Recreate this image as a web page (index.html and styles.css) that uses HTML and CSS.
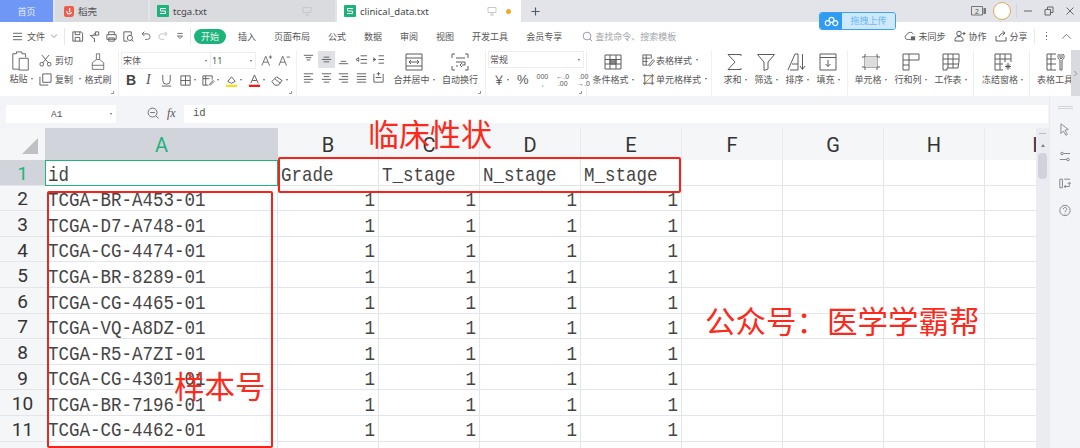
FILE: index.html
```html
<!DOCTYPE html>
<html lang="zh-CN">
<head>
<meta charset="utf-8">
<title>clinical_data.txt</title>
<link rel="stylesheet" href="styles.css">
</head>
<body>
<div class="app">
  <header class="tabbar">
    <div class="tab tab-home">首页</div>
    <div class="tab tab-doc tab-daoke">
      <svg class="logo" viewBox="0 0 10 11"><path d="M2 0h6a2 2 0 0 1 2 2v6a3 3 0 0 1-3 3H2a2 2 0 0 1-2-2V2a2 2 0 0 1 2-2z" fill="#ee5d4b"/><path d="M5.600 2v4.200M2.800 5.200c.2 2 1.400 2.800 2.400 2.800 1.200 0 2-.8 2.400-2" stroke="#fff" fill="none" stroke-width="1.200"/></svg>
      <span>稻壳</span>
    </div>
    <div class="tab tab-doc tab-tcga">
      <svg class="logo logo-s" viewBox="0 0 12 12"><rect width="12" height="12" rx="1" fill="#1fb37c"/><path d="M9 3.500H3.500v2.500h5v2.500H3" stroke="#fff" fill="none"/></svg>
      <span class="tab-name">tcga.txt</span>
      <svg class="mon" viewBox="0 0 10 10"><path d="M1 1.500h8v5H1zM5 6.500V9M3 9h4" /></svg>
    </div>
    <div class="tab tab-doc tab-active">
      <svg class="logo logo-s" viewBox="0 0 12 12"><rect width="12" height="12" rx="1" fill="#1fb37c"/><path d="M9 3.500H3.500v2.500h5v2.500H3" stroke="#fff" fill="none"/></svg>
      <span class="tab-name">clinical_data.txt</span>
      <svg class="mon" viewBox="0 0 10 10"><path d="M1 1.500h8v5H1zM5 6.500V9M3 9h4" /></svg>
      <span class="dot"></span>
    </div>
    <svg class="plus" viewBox="0 0 10 10"><path d="M5 .5v9M.5 5h9"/></svg>
    <div class="tab-right">
      <svg class="win-badge" viewBox="0 0 16 10"><path d="M.5.500h11v8.500H.5z"/><path d="M12.500 2h2.500v6h-2.500" fill="#777" stroke="none"/><text x="6" y="7.500" class="badge-num">2</text></svg>
      <span class="avatar"></span>
      <span class="vsep"></span>
      <svg class="win" viewBox="0 0 10 10"><path d="M1 5h8"/></svg>
      <svg class="win" viewBox="0 0 10 10"><path d="M1 3.500h5.500V9H1zM3.500 3.500V1H9v5.500H6.500"/></svg>
      <svg class="win" viewBox="0 0 10 10"><path d="M1.500 1.500l7 7M8.500 1.500l-7 7"/></svg>
    </div>
  </header>

  <div class="upload">
    <span class="upload-icon"><svg viewBox="0 0 14 10"><circle cx="3.500" cy="6.500" r="2.300"/><circle cx="10.500" cy="6.500" r="2.300"/><circle cx="7" cy="3.500" r="2.300"/></svg></span>
    <span class="upload-text">拖拽上传</span>
  </div>

  <nav class="menubar">
    <div class="qa">
      <svg class="i burger" viewBox="0 0 12 12"><path d="M1 2.500h10M1 6h10M1 9.500h10"/></svg>
      <span class="menu-file">文件</span>
      <svg class="chev" viewBox="0 0 8 8"><path d="M1 2.500l3 3 3-3"/></svg>
      <span class="vsep-m"></span>
      <svg class="i qa-i" viewBox="0 0 14 14"><path d="M2 2h9l1.500 1.500V12H2zM4.500 2v3h5V2M4.500 12V8h5v4"/></svg>
      <svg class="i qa-i" viewBox="0 0 14 14"><path d="M8 2h3.500v3.500H8zM2 6h4M4 6c0 2 1 3 3 3V13"/><circle cx="7" cy="5" r="1"/></svg>
      <svg class="i qa-i" viewBox="0 0 14 14"><path d="M4 5V2h6v3M2 5h10v5H2zM4 8.500h6V12H4z"/></svg>
      <svg class="i qa-i" viewBox="0 0 14 14"><path d="M2 2h8v4M2 2v10h4"/><circle cx="8.500" cy="8.500" r="2.800"/><path d="M10.500 10.500l2 2"/></svg>
      <svg class="i qa-i qa-l" viewBox="0 0 14 14"><path d="M5 2L2.500 4.500 5 7M2.500 4.500h6a3.200 3.200 0 0 1 0 6.500H6"/></svg>
      <svg class="i qa-i qa-l qa-off" viewBox="0 0 14 14"><path d="M9 2l2.500 2.500L9 7M11.500 4.500h-6a3.200 3.200 0 0 0 0 6.500H8"/></svg>
      <svg class="i qa-i qa-l" viewBox="0 0 14 14"><path d="M4 4h6M4 7l3 3 3-3z"/></svg>
      <span class="vsep-m"></span>
    </div>
    <div class="menu-items">
      <span class="pill">开始</span>
      <span class="mi">插入</span>
      <span class="mi">页面布局</span>
      <span class="mi">公式</span>
      <span class="mi">数据</span>
      <span class="mi">审阅</span>
      <span class="mi">视图</span>
      <span class="mi">开发工具</span>
      <span class="mi">会员专享</span>
    </div>
    <div class="search">
      <svg class="i" viewBox="0 0 12 12"><circle cx="5.500" cy="5.500" r="4.200"/><path d="M8.500 8.500l2.500 2.500"/></svg>
      <span>查找命令、搜索模板</span>
    </div>
    <div class="menu-right">
      <span class="mr"><svg class="i" viewBox="0 0 14 12"><path d="M8 10H3.500a2.800 2.800 0 0 1 0-5.500A4 4 0 0 1 11 4"/><rect x="8.500" y="7" width="4" height="3.500" fill="#666"/></svg>未同步</span>
      <span class="mr"><svg class="i" viewBox="0 0 12 12"><circle cx="5" cy="3.500" r="2.300"/><path d="M1 11V9.500c0-2 1.500-3 4-3s4 1 4 3V11zM10 2v3M8.500 3.500h3"/></svg>协作</span>
      <span class="mr"><svg class="i" viewBox="0 0 12 12"><path d="M1 6v5h10V7M4 7c1-3 3-4 5-4M7.500 1L10 3 7.500 5.500"/></svg>分享</span>
      <span class="vsep-r"></span>
      <span class="dots"><i></i><i></i><i></i></span>
      <svg class="caret" viewBox="0 0 12 8"><path d="M1 6.500l5-5 5 5"/></svg>
    </div>
  </nav>

  <section class="ribbon">
    <div class="grp g-clip">
      <div class="big b-paste">
        <svg class="i bi" viewBox="0 0 20 22"><path d="M1 3h4V1h6v2h4v4M1 3v17h7M8 8h10v13H8z"/></svg>
        <span class="lb">粘贴<em class="dn"></em></span>
      </div>
      <div class="stack">
        <span class="sm"><svg class="i" viewBox="0 0 14 14"><circle cx="3" cy="11" r="2"/><circle cx="11" cy="11" r="2"/><path d="M4 9.500L11 1M10 9.500L3 1"/></svg>剪切</span>
        <span class="sm"><svg class="i" viewBox="0 0 14 14"><path d="M4 1h9v9H4zM1 4v9h9"/></svg>复制<em class="dn"></em></span>
      </div>
      <div class="big b-brush">
        <svg class="i bi" viewBox="0 0 18 22"><path d="M7 1h4v7H7zM7 8L2 12v8h14v-8l-5-4M2 15h14"/></svg>
        <span class="lb">格式刷</span>
      </div>
      <em class="corner"></em>
    </div>
    <div class="grp g-font">
      <div class="font-row">
        <span class="sel sel-font">宋体<em class="dn"></em></span>
        <span class="sel sel-size">11<em class="dn"></em></span>
        <svg class="i f-a" viewBox="0 0 14 14"><path d="M1 13L5.500 2 10 13M3 9h5M11 1v4M9 3h4"/></svg>
        <svg class="i f-a" viewBox="0 0 14 14"><path d="M1 13L5.500 2 10 13M3 9h5M10 3h4"/></svg>
      </div>
      <div class="fmt-row">
        <b class="bold">B</b>
        <span class="ital">I</span>
        <svg class="i fi" viewBox="0 0 14 14"><path d="M3 1v6a4 4 0 0 0 8 0V1M2 13h10"/></svg>
        <span class="dd"><svg class="i fi" viewBox="0 0 14 14"><path d="M2 2h10v10H2zM2 7h10M7 2v10"/></svg><em class="dn"></em></span>
        <span class="dd"><svg class="i fi" viewBox="0 0 14 14"><path d="M1 2h10v4M1 2v10h6M1 5h7M4 2v10M9 12l4-4-1-1-4 4z"/></svg><em class="dn"></em></span>
        <span class="dd"><svg class="i fi" viewBox="0 0 14 14"><path d="M3 8l4-5 4 5-4 2z"/><rect x="1" y="11.500" width="12" height="2.500" fill="#f2e01e" stroke="none"/></svg><em class="dn"></em></span>
        <span class="dd"><svg class="i fi" viewBox="0 0 14 14"><path d="M3 10L7 1l4 9M4.500 7h5"/><rect x="1" y="11.500" width="12" height="2.500" fill="#ee1c1c" stroke="none"/></svg><em class="dn"></em></span>
        <span class="dd"><svg class="i fi" viewBox="0 0 14 14"><path d="M1 8l5-5 6 4-4 5H4zM4 5l6 5"/></svg><em class="dn"></em></span>
      </div>
      <em class="corner"></em>
    </div>
    <div class="grp g-align">
      <div class="align-grid">
        <svg class="i ai" viewBox="0 0 14 14"><path d="M2 2.500h10M4 5h6M5 7.500h4"/></svg>
        <svg class="i ai ai-on" viewBox="0 0 14 14"><path d="M2 7h10M4 4.500h6M4 9.500h6"/></svg>
        <svg class="i ai" viewBox="0 0 14 14"><path d="M2 11.500h10M4 9h6"/></svg>
        <svg class="i ai" viewBox="0 0 14 14"><path d="M6 3h7M6 7h7M6 11h7M4 5L1 7l3 2z"/></svg>
        <svg class="i ai" viewBox="0 0 14 14"><path d="M7 3h6M7 7h6M7 11h6M1 5l3 2-3 2M1 7h3"/></svg>
        <svg class="i ai" viewBox="0 0 14 14"><path d="M2 3h10M2 6h7M2 9h10M2 12h7"/></svg>
        <svg class="i ai" viewBox="0 0 14 14"><path d="M2 3h10M4 6h6M2 9h10M4 12h6"/></svg>
        <svg class="i ai" viewBox="0 0 14 14"><path d="M2 3h10M5 6h7M2 9h10M5 12h7"/></svg>
        <svg class="i ai" viewBox="0 0 14 14"><path d="M2 3h10M2 6h10M2 9h10M2 12h10"/></svg>
        <svg class="i ai" viewBox="0 0 14 14"><path d="M2 3v9h10V3M5 3h4M4 7h6M7 1v4"/></svg>
      </div>
      <div class="big b-merge">
        <svg class="i bi" viewBox="0 0 20 18"><path d="M2 1h16v16H2zM2 5h16M2 13h16M5 9h10M5 9l2-2M5 9l2 2M15 9l-2-2M15 9l-2 2"/></svg>
        <span class="lb">合并居中<em class="dn"></em></span>
      </div>
      <div class="big b-wrap">
        <svg class="i bi" viewBox="0 0 20 18"><path d="M2 5V1h3M18 5V1h-3M2 13v4h3M18 13v4h-3M6 5h9M6 9h9v3h-3M12 10l-2 2 2 2M6 13h2"/></svg>
        <span class="lb">自动换行</span>
      </div>
      <em class="corner"></em>
    </div>
    <div class="grp g-num">
      <span class="sel sel-num">常规<em class="dn"></em></span>
      <div class="num-row">
        <span class="dd"><span class="yen">￥</span><em class="dn"></em></span>
        <span class="pct">%</span>
        <span class="mini">000<br>,</span>
        <span class="mini">←.0<br>.00</span>
        <span class="mini">.00<br>→.0</span>
      </div>
      <em class="corner"></em>
    </div>
    <div class="grp g-style">
      <div class="big b-cond">
        <svg class="i bi" viewBox="0 0 20 18"><path d="M2 2h16v14H2zM2 6.500h16M2 11h16M7 2v14M13 2v14"/><path d="M7 6.500h6V11H7z" fill="#888"/></svg>
        <span class="lb">条件格式<em class="dn"></em></span>
      </div>
      <div class="stack s-style">
        <span class="sm"><svg class="i" viewBox="0 0 14 14"><path d="M1 1h9v4M1 1v11h5M1 4.500h8M1 8h5M4.500 1v11M7 12l5-6 1.500 1.500L8.500 13z"/></svg>表格样式<em class="dn"></em></span>
        <span class="sm"><svg class="i" viewBox="0 0 14 14"><path d="M3 1v12M1 3h12M11 1v12M1 11h12"/><path d="M3 11l8-8" stroke="#c9872a"/></svg>单元格样式<em class="dn"></em></span>
      </div>
    </div>
    <div class="grp g-edit">
      <div class="big b-narrow"><svg class="i bi" viewBox="0 0 20 18"><path d="M16 3V1.500H3L10 9l-7 7.500h13V15"/></svg><span class="lb">求和<em class="dn"></em></span></div>
      <div class="big b-narrow"><svg class="i bi" viewBox="0 0 20 18"><path d="M1.500 1.500h17L12 9v7l-4 1.500V9z"/></svg><span class="lb">筛选<em class="dn"></em></span></div>
      <div class="big b-narrow"><svg class="i bi" viewBox="0 0 20 18"><path d="M1 17L8 1h3v16H3M5 11h6M15.500 1v15M13 13l2.500 3.500L18 13"/></svg><span class="lb">排序<em class="dn"></em></span></div>
      <div class="big b-narrow"><svg class="i bi" viewBox="0 0 20 18"><path d="M2 1h16v16H2zM2 4.500h16M10 7v6.500M7.500 11l2.500 2.500 2.500-2.500"/></svg><span class="lb">填充<em class="dn"></em></span></div>
    </div>
    <div class="grp g-cells">
      <div class="big b-cell"><svg class="i bi" viewBox="0 0 20 18"><path d="M4 1v16M16 1v16M1 4h18M1 14h18"/><rect x="4" y="4" width="12" height="10" fill="#ddd" stroke="none"/></svg><span class="lb">单元格<em class="dn"></em></span></div>
      <div class="big b-cell"><svg class="i bi" viewBox="0 0 20 18"><path d="M2 17V1h16v6H2M2 12h6M8 1v16H2"/></svg><span class="lb">行和列<em class="dn"></em></span></div>
      <div class="big b-cell"><svg class="i bi" viewBox="0 0 20 18"><path d="M2 1h16v7l-1 7H6v2H2zM2 6h16M2 11h15M7 1v14M12 1v14"/></svg><span class="lb">工作表<em class="dn"></em></span></div>
    </div>
    <div class="grp g-freeze">
      <div class="big"><svg class="i bi" viewBox="0 0 20 18"><path d="M2 1h16v8M2 1v16h8M2 6h16M2 11h8M7 1v16M12 1v8M15 10v7M12 13.500h6M13 11.500l4 4M17 11.500l-4 4"/></svg><span class="lb">冻结窗格<em class="dn"></em></span></div>
    </div>
    <div class="grp g-tools">
      <div class="big"><svg class="i bi" viewBox="0 0 20 18"><path d="M11 1H2v16h9M2 6h9M2 11h9M6 1v16M15 1v4l1 1 1-1V1M14 1c-2 2-1 5 1 6v10h2V7c2-1 3-4 1-6"/></svg><span class="lb">表格工具</span></div>
    </div>
    <div class="rib-more"><svg viewBox="0 0 6 8"><path d="M1.500 1l3 3-3 3"/></svg></div>
  </section>

  <div class="formula">
    <div class="namebox"><span>A1</span><em class="dn"></em></div>
    <svg class="i fx-zoom" viewBox="0 0 14 14"><circle cx="6" cy="6" r="4.800"/><path d="M3.500 6h5M9.500 9.500l3 3"/></svg>
    <span class="fx">fx</span>
    <div class="fbar">id</div>
  </div>

  <main class="workspace">
    <div class="sheet">
      <div class="grid">
      <div class="row row-head">
        <div class="corner-h"><span></span></div>
        <div class="ch ch-on">A</div><div class="ch">B</div><div class="ch">C</div><div class="ch">D</div><div class="ch">E</div><div class="ch">F</div><div class="ch">G</div><div class="ch">H</div><div class="ch">I</div>
      </div>
      <div class="row">
        <div class="rh rh-on">1</div>
        <div class="c c-active"><span class="t">id</span></div><div class="c"><span class="t">Grade</span></div><div class="c"><span class="t">T_stage</span></div><div class="c"><span class="t">N_stage</span></div><div class="c"><span class="t">M_stage</span></div><div class="c"></div><div class="c"></div><div class="c"></div><div class="c"></div>
      </div>
      <div class="row"><div class="rh">2</div><div class="c"><span class="t">TCGA-BR-A453-01</span></div><div class="c n"><span class="t">1</span></div><div class="c n"><span class="t">1</span></div><div class="c n"><span class="t">1</span></div><div class="c n"><span class="t">1</span></div><div class="c"></div><div class="c"></div><div class="c"></div><div class="c"></div></div>
      <div class="row"><div class="rh">3</div><div class="c"><span class="t">TCGA-D7-A748-01</span></div><div class="c n"><span class="t">1</span></div><div class="c n"><span class="t">1</span></div><div class="c n"><span class="t">1</span></div><div class="c n"><span class="t">1</span></div><div class="c"></div><div class="c"></div><div class="c"></div><div class="c"></div></div>
      <div class="row"><div class="rh">4</div><div class="c"><span class="t">TCGA-CG-4474-01</span></div><div class="c n"><span class="t">1</span></div><div class="c n"><span class="t">1</span></div><div class="c n"><span class="t">1</span></div><div class="c n"><span class="t">1</span></div><div class="c"></div><div class="c"></div><div class="c"></div><div class="c"></div></div>
      <div class="row"><div class="rh">5</div><div class="c"><span class="t">TCGA-BR-8289-01</span></div><div class="c n"><span class="t">1</span></div><div class="c n"><span class="t">1</span></div><div class="c n"><span class="t">1</span></div><div class="c n"><span class="t">1</span></div><div class="c"></div><div class="c"></div><div class="c"></div><div class="c"></div></div>
      <div class="row"><div class="rh">6</div><div class="c"><span class="t">TCGA-CG-4465-01</span></div><div class="c n"><span class="t">1</span></div><div class="c n"><span class="t">1</span></div><div class="c n"><span class="t">1</span></div><div class="c n"><span class="t">1</span></div><div class="c"></div><div class="c"></div><div class="c"></div><div class="c"></div></div>
      <div class="row"><div class="rh">7</div><div class="c"><span class="t">TCGA-VQ-A8DZ-01</span></div><div class="c n"><span class="t">1</span></div><div class="c n"><span class="t">1</span></div><div class="c n"><span class="t">1</span></div><div class="c n"><span class="t">1</span></div><div class="c"></div><div class="c"></div><div class="c"></div><div class="c"></div></div>
      <div class="row"><div class="rh">8</div><div class="c"><span class="t">TCGA-R5-A7ZI-01</span></div><div class="c n"><span class="t">1</span></div><div class="c n"><span class="t">1</span></div><div class="c n"><span class="t">1</span></div><div class="c n"><span class="t">1</span></div><div class="c"></div><div class="c"></div><div class="c"></div><div class="c"></div></div>
      <div class="row"><div class="rh">9</div><div class="c"><span class="t">TCGA-CG-4301-01</span></div><div class="c n"><span class="t">1</span></div><div class="c n"><span class="t">1</span></div><div class="c n"><span class="t">1</span></div><div class="c n"><span class="t">1</span></div><div class="c"></div><div class="c"></div><div class="c"></div><div class="c"></div></div>
      <div class="row"><div class="rh">10</div><div class="c"><span class="t">TCGA-BR-7196-01</span></div><div class="c n"><span class="t">1</span></div><div class="c n"><span class="t">1</span></div><div class="c n"><span class="t">1</span></div><div class="c n"><span class="t">1</span></div><div class="c"></div><div class="c"></div><div class="c"></div><div class="c"></div></div>
      <div class="row"><div class="rh">11</div><div class="c"><span class="t">TCGA-CG-4462-01</span></div><div class="c n"><span class="t">1</span></div><div class="c n"><span class="t">1</span></div><div class="c n"><span class="t">1</span></div><div class="c n"><span class="t">1</span></div><div class="c"></div><div class="c"></div><div class="c"></div><div class="c"></div></div>
      <div class="row"><div class="rh"></div><div class="c"></div><div class="c"></div><div class="c"></div><div class="c"></div><div class="c"></div><div class="c"></div><div class="c"></div><div class="c"></div><div class="c"></div></div>
      </div>

      <div class="mark mark-head"></div>
      <div class="mark mark-ids"></div>
      <div class="note note-clin">临床性状</div>
      <div class="note note-ids">样本号</div>
      <div class="note note-pub">公众号：医学学霸帮</div>
    </div>
    <div class="vscroll">
      <span class="vs-grip"></span>
      <span class="vs-up"></span>
      <span class="vs-thumb"></span>
    </div>
    <aside class="sidepanel">
      <span class="sp-grip"></span>
      <svg class="i sp-i" viewBox="0 0 14 16"><path d="M2 1l9 7-4 1 3 5-2 1-3-5-3 3z"/></svg>
      <svg class="i sp-i" viewBox="0 0 14 14"><circle cx="3.500" cy="3.500" r="1.500"/><circle cx="10.500" cy="10.500" r="1.500"/><path d="M5 3.500h8M1 10.500h8"/></svg>
      <svg class="i sp-i" viewBox="0 0 14 14"><path d="M1 2v10h3V2zM6 2h7M8 12l-2-1.500L8 9M6 10.500h6V6M10 7.500l2-2 2 2"/></svg>
      <svg class="i sp-i" viewBox="0 0 14 14"><circle cx="7" cy="7" r="6"/><path d="M5 5.500a2 2 0 1 1 3 1.700c-.7.400-1 .8-1 1.800M7 10.500v1"/></svg>
    </aside>
  </main>
</div>
</body>
</html>
```

FILE: styles.css
```css
* { box-sizing: border-box; }
html, body { margin: 0; padding: 0; height: 448px; overflow: hidden; background: #fff; }
body { font-family: "Noto Sans CJK SC", "Noto Sans", sans-serif; font-size: 9px; color: #555; }
em { font-style: normal; }
svg { display: block; flex: none; }
.i { fill: none; stroke: #5c5c5c; stroke-width: 1; }

.app { position: relative; width: 1080px; height: 448px; display: flex; flex-direction: column; overflow: hidden; }

/* tabs */
.tabbar { height: 22px; background: #e2e4e9; display: flex; align-items: stretch; flex: none; }
.tab { display: flex; align-items: center; font-size: 9px; }
.tab-home { width: 53px; background: #6f98f6; color: #e8eefc; justify-content: center; margin-right: 2px; }
.tab-doc { background: #dadbdf; margin-right: 2px; padding-left: 9px; color: #555; font-size: 9.500px; }
.tab-daoke { width: 93px; padding-left: 9px; gap: 4px; }
.tab-tcga { width: 185px; padding-left: 7px; }
.tab-active { width: 184px; background: #fff; padding-left: 7px; }
.logo { width: 10px; height: 11px; }
.logo-s { width: 12px; height: 12px; margin-right: 4px; }
.tab-name { font-family: "Noto Sans", sans-serif; color: #444; flex: 1; }
.mon { width: 10px; height: 10px; fill: none; stroke: #c4c8ce; margin-right: 23px; }
.tab-active .mon { margin-right: 9px; }
.dot { width: 5px; height: 5px; border-radius: 50%; background: #f2a72e; margin-right: 10px; }
.plus { width: 9px; height: 9px; margin: 6.500px 0 0 8px; stroke: #4e5a6c; stroke-width: 1.300; fill: none; }
.tab-right { margin-left: auto; display: flex; align-items: center; padding-right: 5px; height: 22px; }
.win-badge { width: 16px; height: 10px; fill: none; stroke: #777; margin-right: 6px; }
.badge-num { font-size: 7px; fill: #555; stroke: none; text-anchor: middle; font-family: "Liberation Sans", sans-serif; }
.avatar { width: 18px; height: 18px; border-radius: 50%; background: #fff; border: 1.500px solid #d9a95c; margin-right: 5px; }
.vsep { width: 1px; height: 14px; background: #d3d5da; margin-right: 6px; }
.win { width: 10px; height: 10px; stroke: #666; fill: none; margin-right: 11px; }
.win:last-child { margin-right: 0; }

/* upload tag */
.upload { position: absolute; left: 819px; top: 12px; width: 77px; height: 18px; display: flex; border-radius: 3px; overflow: hidden; border: 1px solid #3aa1f2; }
.upload-icon { width: 22px; background: #2e9cf1; display: flex; align-items: center; justify-content: center; }
.upload-icon svg { width: 15px; height: 11px; fill: #2e9cf1; stroke: #fff; stroke-width: 1.100; }
.upload-text { flex: 1; background: #cfe8fb; color: #69b9f6; text-align: center; line-height: 16px; font-size: 9px; }

/* menu */
.menubar { height: 28px; background: #fff; display: flex; align-items: center; flex: none; padding-left: 12px; }
.qa { display: flex; align-items: center; }
.burger { width: 11px; height: 11px; margin-right: 4px; }
.menu-file { margin-right: 5px; }
.chev { width: 8px; height: 8px; stroke: #999; fill: none; margin-right: 6px; }
.vsep-m { width: 1px; height: 17px; background: #e6e7ea; }
.qa-i { width: 13px; height: 13px; margin-left: 4px; }
.qa-i:nth-of-type(3) { margin-left: 6px; }
.qa-l { width: 12px; height: 12px; margin-left: 5px; }
.qa-off { stroke: #bbb; }
.qa > .vsep-m:last-child { margin-left: 4px; margin-right: 3px; }
.menu-items { display: flex; align-items: center; gap: 18px; }
.pill { width: 32px; height: 15px; line-height: 15px; border-radius: 8px; background: #1fb37c; color: #e9f8f2; text-align: center; margin-right: -6px; }
.search { display: flex; align-items: center; gap: 2px; margin-left: 20px; color: #a3a5aa; }
.search svg { width: 11px; height: 11px; stroke: #8b93a5; }
.menu-right { margin-left: auto; display: flex; align-items: center; padding-right: 8px; }
.mr { display: flex; align-items: center; gap: 2px; margin-right: 9px; }
.mr svg { width: 12px; height: 12px; }
.vsep-r { width: 1px; height: 15px; background: #e6e7ea; margin: 0 11px 0 -3px; }
.dots { display: flex; flex-direction: column; gap: 2px; margin-right: 14px; }
.dots i { width: 1.500px; height: 1.500px; background: #666; display: block; }
.caret { width: 11px; height: 7px; stroke: #666; fill: none; }

/* ribbon */
.ribbon { height: 46px; display: flex; background: #fff; flex: none; }
.grp { position: relative; height: 46px; display: flex; border-right: 1px solid #f0f1f3; }
.big { display: flex; flex-direction: column; align-items: center; padding-top: 3px; gap: 2px; white-space: nowrap; }
.bi { width: 20px; height: 18px; }
.lb { height: 13px; line-height: 13px; display: flex; align-items: center; }
.dn { display: inline-block; width: 0; height: 0; border: 1.800px solid transparent; border-top: 2.200px solid #666; border-bottom: 0; margin-left: 3px; }
.corner { position: absolute; right: 4px; bottom: 2px; width: 3px; height: 3px; border-right: 1px solid #999; border-bottom: 1px solid #999; }
.stack { display: flex; flex-direction: column; }
.sm { display: flex; align-items: center; gap: 3px; height: 13px; margin-top: 3.500px; white-space: nowrap; }
.sm + .sm { margin-top: 6px; }
.sm svg { width: 13px; height: 13px; flex: none; }

.g-clip { width: 119px; padding-left: 8px; }
.b-paste { width: 26px; }
.b-paste .bi { width: 20px; height: 20px; margin-top: -2px; }
.b-paste { gap: 1px; }
.g-clip .stack { margin-left: 5px; width: 45px; }
.b-brush { width: 28px; }

.g-font { width: 178px; flex-direction: column; padding-left: 2px; }
.font-row { display: flex; align-items: center; height: 17px; margin-top: 2px; }
.sel { display: flex; align-items: center; justify-content: space-between; height: 17px; border: 1px solid #eceef0; padding: 0 3px 0 1px; color: #555; }
.sel-font { width: 90px; }
.sel-size { width: 45px; border-left: 0; font-family: "Noto Sans", sans-serif; }
.f-a { width: 12px; height: 13px; margin-left: 5px; }
.f-a + .f-a { margin-left: 5px; }
.fmt-row { display: flex; align-items: center; gap: 6px; margin-top: 3px; padding-left: 5px; }
.bold { font: 700 14px "Liberation Sans", sans-serif; color: #444; width: 10px; }
.ital { font: italic 14px "Liberation Serif", serif; color: #555; width: 8px; margin-left: 4px; }
.fi { width: 13px; height: 13px; }
.dd { display: flex; align-items: center; }
.dd .dn { margin-left: 2px; }

.g-align { width: 189px; padding-left: 3px; }
.align-grid { display: grid; grid-template-columns: repeat(5, 17.500px); grid-auto-rows: 17px; align-content: start; row-gap: 1px; padding-top: 1px; width: 92px; }
.ai { width: 17px; height: 17px; padding: 2px; }
.ai-on { background: #dfe1e5; }
.b-merge { width: 44px; }
.b-wrap { width: 40px; margin-left: 4px; }

.g-num { width: 101px; flex-direction: column; padding-left: 2px; }
.sel-num { width: 96px; margin-top: 1px; height: 17px; }
.num-row { display: flex; align-items: center; margin-top: 3px; padding-left: 5px; gap: 8px; }
.yen { font-size: 12px; }
.pct { font: 13px "Liberation Sans", sans-serif; color: #555; }
.mini { font: 7px/7px "Liberation Sans", sans-serif; color: #555; text-align: center; width: 14px; }

.g-style { width: 125px; padding-left: 5px; }
.b-cond { width: 42px; }
.s-style { margin-left: 8px; }
.s-style .sm { gap: 1px; }

.g-edit { width: 136px; padding-left: 10.500px; gap: 6px; }
.b-narrow { width: 25px; }
.g-cells { width: 126px; padding-left: 7px; gap: 9px; }
.b-cell { width: 31px; }
.g-freeze { width: 56px; padding-left: 8px; }
.g-tools { width: 41px; padding-left: 7px; border-right: 0; overflow: hidden; }
.rib-more { width: 9px; background: #d8dadf; display: flex; align-items: center; justify-content: center; }
.rib-more svg { width: 5px; height: 7px; fill: none; stroke: #888; }

/* formula */
.formula { height: 32px; background: #f3f4f7; display: flex; align-items: flex-start; padding: 9px 0 0 6px; flex: none; }
.namebox { width: 110px; height: 18px; background: #fff; display: flex; align-items: center; padding: 0 4px; font: 9.500px "Liberation Mono", monospace; color: #555; }
.namebox span { margin-left: 41px; flex: 1; }
.fx-zoom { width: 13px; height: 13px; margin: 2px 0 0 31px; stroke: #667; }
.fx { font: italic 12px "Liberation Serif", serif; color: #555; margin: 1px 0 0 7px; width: 17px; }
.fbar { width: 864px; height: 18px; background: #fff; padding-left: 9px; font: 10.500px/16px "Liberation Mono", monospace; color: #555; }

/* workspace */
.workspace { flex: 1; display: flex; min-height: 0; background: #fff; }
.sheet { position: relative; width: 1036px; flex: none; }
.grid { width: 1036px; height: 320px; overflow: hidden; }
.row { display: grid; grid-template-columns: 45px 233px repeat(7, 101px) 101px; height: 25.600px; }
.row-head { height: 32px; background: #f5f6f8; }
.corner-h { display: flex; align-items: flex-end; justify-content: flex-end; padding: 0 7px 6px 0; }
.corner-h span { width: 0; height: 0; border: 8px solid transparent; border-right: 8px solid #bfc0c4; border-bottom: 8px solid #bfc0c4; }
.ch { display: flex; align-items: center; justify-content: center; padding-top: 2px; font: 20px Roboto, sans-serif; color: #333; border-right: 1px solid #e9eaef; }
.ch-on { background: #d1d4db; color: #1fb37c; border-right: 0; }
.rh { background: #f5f6f8; border-bottom: 1px solid #e4e5ea; display: flex; align-items: center; justify-content: center; padding-top: 2px; font: 19px/1 Roboto, sans-serif; color: #333; }
.rh-on { background: #d1d4db; color: #1fb37c; }
.c { border-right: 1px solid #e3e5ee; border-bottom: 1px solid #e3e5ee; display: flex; align-items: center; padding: 0 3px; overflow: visible; white-space: nowrap; }
.n { justify-content: flex-end; }
.c-active { border: 1.500px solid #1fb37c; padding-left: 2px; }
.t { display: inline-block; font: 17.500px/1 "Liberation Mono", monospace; color: #454545; transform: translateY(3px) scaleY(1.200); }

/* annotations over the sheet */
.mark { position: absolute; border: 2px solid #f5231a; border-radius: 2px; pointer-events: none; }
.mark-head { left: 278px; top: 29px; width: 403px; height: 36px; }
.mark-ids { left: 47px; top: 63px; width: 226px; height: 257px; }
.note { position: absolute; color: #fa2a1c; white-space: nowrap; line-height: 1; }
.note-clin { left: 368px; top: -11px; font-size: 31px; }
.note-ids { left: 174px; top: 242px; font-size: 30.500px; }
.note-pub { left: 705px; top: 177px; font-size: 30.500px; }

/* scrollbar + panel */
.vscroll { width: 13px; background: #eaecf1; flex: none; display: flex; flex-direction: column; align-items: center; }
.vs-grip { width: 7px; height: 1px; background: #b9bcc4; margin-top: 5px; }
.vs-up { width: 0; height: 0; border: 2.500px solid transparent; border-bottom: 3px solid #7d828c; border-top: 0; margin-top: 10px; }
.vs-thumb { width: 9px; height: 26px; border-radius: 4px; background: #d0d3db; margin-top: 6px; }
.sidepanel { flex: 1; background: #f3f4f7; margin-top: -32px; display: flex; flex-direction: column; align-items: center; z-index: 1; border-left: 1px solid #e9ebef; }
.sp-grip { width: 15px; height: 3px; border-top: 1px solid #d3d5da; border-bottom: 1px solid #d3d5da; margin-top: 10px; }
.sp-i { width: 12px; height: 13px; stroke: #777; margin-top: 14px; }
```
